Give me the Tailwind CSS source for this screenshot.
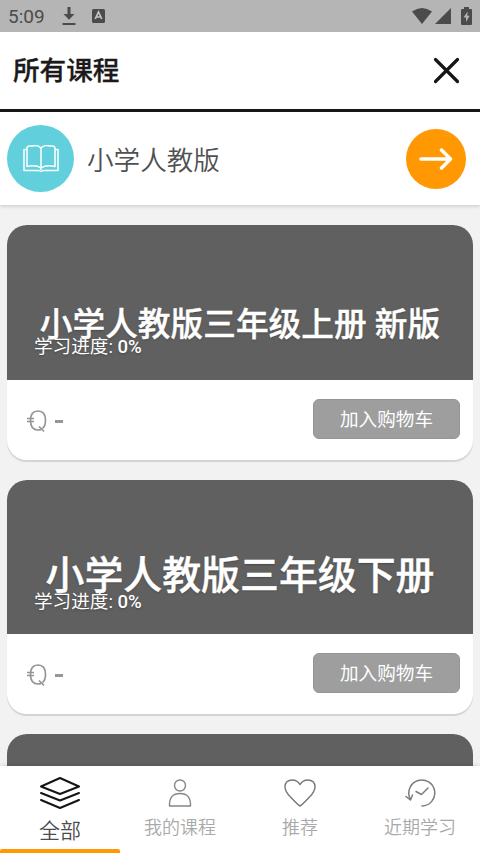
<!DOCTYPE html>
<html lang="zh-CN">
<head>
<meta charset="utf-8">
<title>所有课程</title>
<script src="https://cdn.jsdelivr.net/npm/@tailwindcss/browser@4"></script>
</head>
<body class="w-[480px] h-[853px] overflow-hidden bg-[#f2f2f2] font-[Roboto,'Noto_Sans_CJK_SC',sans-serif]">
<div class="flex flex-col h-[853px] overflow-hidden">
  <div class="h-8 shrink-0 bg-[#b5b5b5] flex items-center pl-[8px] pr-[8px] text-[#4b4b4b]">
    <span class="text-[19px] leading-8 w-[53px] pt-px">5:09</span>
    <svg class="w-4 h-[18px]" viewBox="0 0 16 18" fill="none" stroke="currentColor"><path d="M8 0v10" stroke-width="3"/><path d="M2.5 7h11L8 12.7z" fill="currentColor" stroke="none"/><path d="M1.500 17h13" stroke-width="2"/></svg>
    <svg class="w-[13px] h-[14px] ml-[15px]" viewBox="0 0 13 14"><rect width="13" height="14" rx="1.500" fill="currentColor"/><path d="M3.200 10 6.500 3l3.300 7M4.500 8h4" fill="none" stroke="#c4c4c4" stroke-width="1.700"/></svg>
    <svg class="w-5 h-4 ml-auto" viewBox="0 0 20 16"><path d="M0 3.500Q10-3.500 20 3.500L10 16z" fill="currentColor"/></svg>
    <svg class="w-4 h-4 ml-[3px]" viewBox="0 0 16 16"><path d="M16 0v16H0z" fill="currentColor"/></svg>
    <svg class="w-[11px] h-[18px] ml-[10px]" viewBox="0 0 11 18"><path d="M3 0h5v2h2q1 0 1 1v14q0 1-1 1H1q-1 0-1-1V3q0-1 1-1h2z" fill="currentColor"/><path d="M6.600 4.500 2.500 10.500H5v4.500L8.700 8.800H6.300z" fill="#b5b5b5"/></svg>
  </div>
  <header class="h-[80px] shrink-0 bg-white border-b-[3px] border-[#1b1719] flex items-center justify-between pl-[13px] pr-5">
    <h1 class="text-[26.600px] font-medium leading-8 pb-[3px] text-[#1b191a] [-webkit-text-stroke:0.3px_#1b191a] font-['Noto_Sans_CJK_SC',sans-serif]">所有课程</h1>
    <svg class="w-[27px] h-[27px]" viewBox="0 0 27 27" fill="none" stroke="#161616" stroke-width="3.200" stroke-linecap="round"><path d="M2.500 2.500l22 22M24.500 2.500l-22 22"/></svg>
  </header>
  <section class="h-[93px] shrink-0 bg-white flex items-center pl-[7px] pr-[14px] shadow-[0_1px_4px_rgba(0,0,0,0.18)]">
    <div class="w-[67px] h-[67px] rounded-full bg-[#61d0dc] flex items-center justify-center">
      <svg class="w-[36px] h-[27px]" viewBox="0 0 36 27" fill="none" stroke="#fff" stroke-width="1.500" stroke-linejoin="round"><path d="M18 3Q15-.5 9 1Q4 .5 4 3V21.500Q13 19.500 18 23Q23 19.500 32 21.500V3Q32 .5 27 1Q21-.5 18 3V25M4 4.500H1V25.500H16Q18 27 20 25.500H35V4.500H32"/></svg>
    </div>
    <h2 class="ml-[13px] text-[26.600px] leading-8 text-[#505050] font-['Noto_Sans_CJK_SC',sans-serif] font-[350]">小学人教版</h2>
    <div class="ml-auto w-[60px] h-[60px] rounded-full bg-[#ff9803] flex items-center justify-center">
      <svg class="w-[34px] h-[22px]" viewBox="0 0 34 22" fill="none" stroke="#fff" stroke-width="3.500" stroke-linecap="round" stroke-linejoin="round"><path d="M2 11h29M22.500 2l9 9-9 9"/></svg>
    </div>
  </section>
  <main class="flex-1 min-h-0 overflow-hidden flex flex-col gap-[20px] pt-[20px] px-[7px]">
    <article class="h-[235px] shrink-0 bg-white rounded-[20px] overflow-hidden shadow-[0_2px_1px_#d3d3d3]">
      <div class="relative h-[155px] bg-[#606060] text-white flex justify-center">
        <h3 class="mt-[80px] text-[32.700px] leading-10 font-medium [-webkit-text-stroke:0.4px_#fff] whitespace-nowrap [text-shadow:0_1px_2px_#3338]">小学人教版三年级上册 新版</h3>
        <p class="absolute left-[27px] top-[108px] text-[18.600px] leading-[28px] [text-shadow:0_1px_2px_#3338]">学习进度: <span class="font-medium">0%</span></p>
      </div>
      <div class="h-[80px] flex items-center justify-between pl-[20px] pr-[13px] pb-[3px]">
        <div class="flex items-center gap-[8px]">
          <svg class="w-5 h-6 mt-1" viewBox="0 0 20 24" fill="none" stroke="#959595" stroke-width="1.700"><path d="M15.500 19.500Q18.500 17 18.500 11.500Q18.500 2 11 2Q3.500 2 3.500 11.500Q3.500 21 11 21Q12.500 21 14 20.500M12 17.500l5 5M0 9.500h7M0 12.500h7"/></svg>
          <span class="w-[8px] h-[3px] mt-[5px] bg-[#969696]"></span>
        </div>
        <button class="w-[147px] h-10 rounded-[6px] bg-[#9e9e9e] border border-[#959595] text-white text-[18.600px] leading-[40px]">加入购物车</button>
      </div>
    </article>
    <article class="h-[234px] shrink-0 bg-white rounded-[20px] overflow-hidden shadow-[0_2px_1px_#d3d3d3]">
      <div class="relative h-[154px] bg-[#606060] text-white flex justify-center">
        <h3 class="mt-[74px] text-[38.900px] leading-[44px] font-medium [-webkit-text-stroke:0.4px_#fff] whitespace-nowrap [text-shadow:0_1px_2px_#3338]">小学人教版三年级下册</h3>
        <p class="absolute left-[27px] top-[108px] text-[18.600px] leading-[28px] [text-shadow:0_1px_2px_#3338]">学习进度: <span class="font-medium">0%</span></p>
      </div>
      <div class="h-[80px] flex items-center justify-between pl-[20px] pr-[13px] pb-[3px]">
        <div class="flex items-center gap-[8px]">
          <svg class="w-5 h-6 mt-1" viewBox="0 0 20 24" fill="none" stroke="#959595" stroke-width="1.700"><path d="M15.500 19.500Q18.500 17 18.500 11.500Q18.500 2 11 2Q3.500 2 3.500 11.500Q3.500 21 11 21Q12.500 21 14 20.500M12 17.500l5 5M0 9.500h7M0 12.500h7"/></svg>
          <span class="w-[8px] h-[3px] mt-[5px] bg-[#969696]"></span>
        </div>
        <button class="w-[147px] h-10 rounded-[6px] bg-[#9e9e9e] border border-[#959595] text-white text-[18.600px] leading-[40px]">加入购物车</button>
      </div>
    </article>
    <article class="h-[235px] shrink-0 bg-[#606060] rounded-[20px]"></article>
  </main>
  <nav class="h-[87px] shrink-0 bg-white grid grid-cols-4 text-[18px] text-[#a9a9a9] font-[350] shadow-[0_-1px_4px_rgba(0,0,0,0.12)]">
    <a class="flex flex-col items-center pt-[11px] text-[#4c4c4c]">
      <svg class="w-10 h-8" viewBox="0 0 40 32" fill="none" stroke="#151515" stroke-width="2" stroke-linecap="round" stroke-linejoin="round"><path d="M20 1l19 8.500L20 17 1 9.500zM1 16l19 7.500L39 16M1 23l19 8 19-8"/></svg>
      <span class="text-[21px] leading-7 mt-[8px]">全部</span>
      <span class="mt-auto w-full h-1 rounded-t-[2px] bg-[#ff9803]"></span>
    </a>
    <a class="flex flex-col items-center pt-[13px]">
      <svg class="w-6 h-7" viewBox="0 0 24 28" fill="none" stroke="#868686" stroke-width="1.400" stroke-linejoin="round"><circle cx="12" cy="6.500" r="5.500"/><path d="M1.500 27Q1 14.500 12 14.500T22.500 27z"/></svg>
      <span class="leading-6 mt-[9px]">我的课程</span>
    </a>
    <a class="flex flex-col items-center pt-[13px]">
      <svg class="w-8 h-7" viewBox="0 0 32 28" fill="none" stroke="#777" stroke-width="1.400" stroke-linejoin="round"><path d="M16 27Q14 26 6.500 18Q1 12.500 1 8Q1 1 8.500 1Q13 1 16 5.500Q19 1 23.500 1Q31 1 31 8Q31 12.500 25.500 18Q18 26 16 27z"/></svg>
      <span class="leading-6 mt-[9px]">推荐</span>
    </a>
    <a class="flex flex-col items-center pt-[13px]">
      <svg class="w-[31px] h-7" viewBox="0 0 31 28" fill="none" stroke="#7c7c7c" stroke-width="1.500" stroke-linecap="round" stroke-linejoin="round"><path d="M17 27A13 13 0 1 0 5 19.500M1 17.500l4.500 3.500 2-5M11 12.500l5.500 3L23 9"/></svg>
      <span class="leading-6 mt-[9px]">近期学习</span>
    </a>
  </nav>
</div>
</body>
</html>
